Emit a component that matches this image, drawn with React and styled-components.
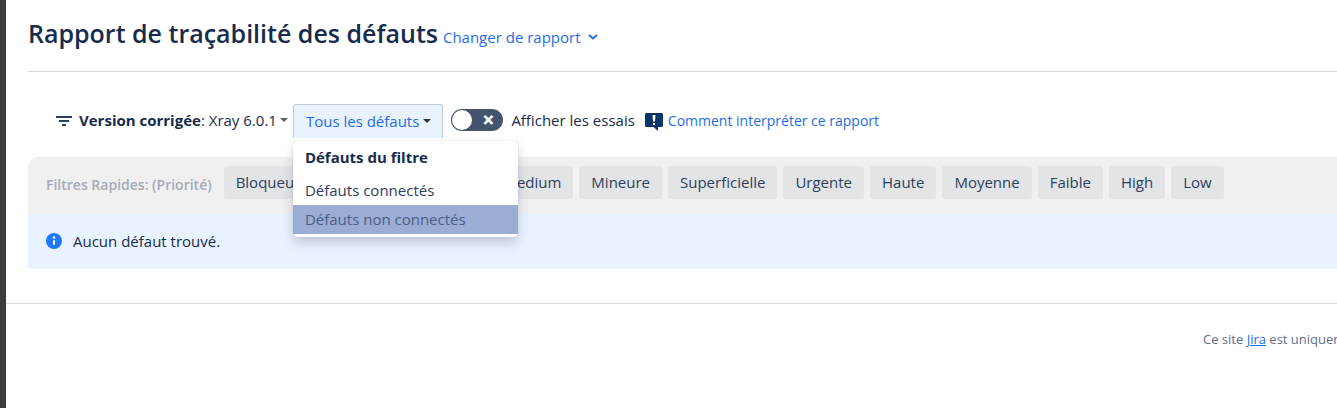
import React, { useState } from "react";
import styled, { createGlobalStyle } from "styled-components";

const GlobalStyle = createGlobalStyle`
  * {
    box-sizing: border-box;
  }
  body {
    margin: 0;
    background: #ffffff;
    overflow-x: hidden;
  }
  button, input {
    font: inherit;
  }
`;

const Page = styled.div`
  min-height: 100vh;
  border-left: 6px solid #3c3c3c;
  color: #172b4d;
  font-family: "Open Sans", "Noto Sans", sans-serif;
  font-size: 15px;
  line-height: 20px;
`;

const Content = styled.main`
  padding: 15px 0 34px 22px;
`;

const Header = styled.header`
  display: flex;
  align-items: baseline;
  gap: 5px;
  padding-bottom: 20px;
  border-bottom: 1px solid #d5d8d8;
`;

const Title = styled.h1`
  margin: 0;
  font-size: 25px;
  font-weight: 600;
  line-height: 36px;
`;

const PlainButton = styled.button`
  display: flex;
  align-items: center;
  padding: 0;
  border: 0;
  background: none;
  color: inherit;
  cursor: pointer;
  white-space: nowrap;
`;

const ChangeReport = styled(PlainButton)`
  gap: 6px;
  color: #1d6ee8;
`;

const Toolbar = styled.div`
  display: flex;
  align-items: center;
  margin-top: 32px;
  padding-left: 28px;
`;

const VersionButton = styled(PlainButton)`
  gap: 3px;
  padding-bottom: 2px;
`;

const FilterIcon = styled.svg`
  width: 16px;
  height: 14px;
  margin-right: 4px;
`;

const Caret = styled.span`
  border: 4px solid transparent;
  border-top-color: ${props => props.color};
  border-bottom: 0;
`;

const Dropdown = styled.div`
  position: relative;
  margin-left: 5px;
`;

const DropdownButton = styled(PlainButton)`
  height: 34px;
  gap: 4px;
  padding: 0 11px 2px 12px;
  border: 1px solid #c5cad1;
  border-bottom: 0;
  border-radius: 3px 3px 0 0;
  background: #e9f2ff;
  color: #1d6ee8;
`;

const Menu = styled.div`
  position: absolute;
  top: 37px;
  left: 0;
  z-index: 1;
  width: 225px;
  padding-bottom: 3px;
  border-radius: 4px;
  background: #ffffff;
  box-shadow: 0 6px 12px rgba(9, 30, 66, 0.18), 0 0 1px rgba(9, 30, 66, 0.3);
`;

const MenuHeading = styled.div`
  padding: 6px 12px 9px;
  font-weight: 700;
`;

const MenuItem = styled.button`
  display: block;
  width: 100%;
  height: 29px;
  padding: 0 12px 2px;
  border: 0;
  background: ${props => (props.$active ? "#9aadd4" : "transparent")};
  color: ${props => (props.$active ? "#4b5f86" : "#2c3e5d")};
  text-align: left;
`;

const Switch = styled.label`
  display: flex;
  align-items: center;
  gap: 8px;
  margin-left: 8px;
  padding-bottom: 2px;
  white-space: nowrap;
  cursor: pointer;
`;

const SwitchInput = styled.input`
  appearance: none;
  display: flex;
  align-items: center;
  width: 52px;
  height: 22px;
  margin: 0;
  padding: 1px;
  border-radius: 11px;
  background: ${props => (props.checked ? "#22a06b" : "#44546f")};
  cursor: pointer;

  &::before {
    content: "";
    width: 20px;
    height: 20px;
    margin-left: ${props => (props.checked ? "30px" : "0")};
    border-radius: 50%;
    background: #ffffff;
  }

  &::after {
    content: "✕";
    display: ${props => (props.checked ? "none" : "block")};
    margin-left: 10px;
    color: #ffffff;
    font: bold 14px/18px "DejaVu Sans", sans-serif;
    -webkit-text-stroke: 1px #ffffff;
  }
`;

const HelpLink = styled.a`
  display: flex;
  align-items: center;
  gap: 5px;
  margin-left: 10px;
  color: #1d6ee8;
  font-size: 14px;
  text-decoration: none;
  white-space: nowrap;
`;

const QuickFilters = styled.div`
  display: flex;
  align-items: flex-start;
  margin-top: 19px;
  padding: 9px 0 14px 18px;
  border-radius: 10px 0 0 0;
  background: #f0f0f0;
`;

const QuickFiltersLabel = styled.span`
  margin: 9px 12px 0 0;
  color: #a5abb7;
  font-size: 14px;
  font-weight: 600;
  white-space: nowrap;
`;

const Chips = styled.div`
  display: flex;
  gap: 6px;
`;

const Chip = styled.button`
  height: 33px;
  padding: 0 12px 2px;
  border: 0;
  border-radius: 3px;
  background: #e3e4e6;
  color: #2c3e5d;
  cursor: pointer;
`;

const Notice = styled.div`
  display: flex;
  align-items: center;
  gap: 11px;
  padding: 18px;
  border-radius: 0 0 0 3px;
  background: #e9f2ff;
`;

const Footer = styled.footer`
  display: flex;
  justify-content: flex-end;
  padding-top: 25px;
  border-top: 1px solid #dcdfe0;
`;

const FooterText = styled.p`
  width: 134px;
  margin: 0;
  overflow: hidden;
  color: #626f86;
  font-size: 13px;
  white-space: nowrap;
`;

const FooterLink = styled.a`
  color: #1d6ee8;
`;

const priorities = [
  "Bloqueur",
  "Critique",
  "Majeure",
  "Medium",
  "Mineure",
  "Superficielle",
  "Urgente",
  "Haute",
  "Moyenne",
  "Faible",
  "High",
  "Low"
];

const App = () => {
  const [menuOpen, setMenuOpen] = useState(true);
  const [showTests, setShowTests] = useState(false);

  return (
    <Page>
      <GlobalStyle />
      <Content>
        <Header>
          <Title>Rapport de traçabilité des défauts</Title>
          <ChangeReport>
            Changer de rapport
            <svg width="12" height="8" viewBox="0 0 12 8" fill="none">
              <path d="M2 2 6 5.500 10 2" stroke="#1d6ee8" strokeWidth="2" />
            </svg>
          </ChangeReport>
        </Header>

        <Toolbar>
          <VersionButton>
            <FilterIcon viewBox="0 0 16 14" fill="#2c3e5d">
              <rect x="0" y="3" width="16" height="2" />
              <rect x="3" y="7" width="10" height="2" />
              <rect x="6" y="11" width="4" height="2" />
            </FilterIcon>
            <span>
              <b>Version corrigée</b>: Xray 6.0.1
            </span>
            <Caret color="#5a6270" />
          </VersionButton>

          <Dropdown>
            <DropdownButton
              aria-expanded={menuOpen}
              onClick={() => setMenuOpen(!menuOpen)}
            >
              Tous les défauts
              <Caret color="#2b3544" />
            </DropdownButton>
            {menuOpen && (
              <Menu>
                <MenuHeading>Défauts du filtre</MenuHeading>
                <MenuItem>Défauts connectés</MenuItem>
                <MenuItem $active>Défauts non connectés</MenuItem>
              </Menu>
            )}
          </Dropdown>

          <Switch>
            <SwitchInput
              type="checkbox"
              role="switch"
              checked={showTests}
              onChange={() => setShowTests(!showTests)}
            />
            Afficher les essais
          </Switch>

          <HelpLink href="#help">
            <svg width="18" height="20" viewBox="0 -2 18 20">
              <path
                d="M1.500 0h15Q18 0 18 1.500v11Q18 14 16.500 14H13v4L8.500 14h-7Q0 14 0 12.500v-11Q0 0 1.500 0Z"
                fill="#0b3568"
              />
              <path d="M7.500 2h3L10 8.500H8Z" fill="#ffffff" />
              <rect x="8" y="10" width="2" height="2" fill="#ffffff" />
            </svg>
            Comment interpréter ce rapport
          </HelpLink>
        </Toolbar>

        <QuickFilters>
          <QuickFiltersLabel>Filtres Rapides: (Priorité)</QuickFiltersLabel>
          <Chips>
            {priorities.map(priority => (
              <Chip key={priority}>{priority}</Chip>
            ))}
          </Chips>
        </QuickFilters>

        <Notice>
          <svg width="16" height="16" viewBox="0 0 16 16">
            <circle cx="8" cy="8" r="8" fill="#1d7afc" />
            <circle cx="8" cy="4.500" r="1.200" fill="#ffffff" />
            <rect x="7" y="7" width="2" height="5" rx="1" fill="#ffffff" />
          </svg>
          Aucun défaut trouvé.
        </Notice>
      </Content>

      <Footer>
        <FooterText>
          Ce site <FooterLink href="#jira">Jira</FooterLink> est uniquement
        </FooterText>
      </Footer>
    </Page>
  );
};

export default App;
